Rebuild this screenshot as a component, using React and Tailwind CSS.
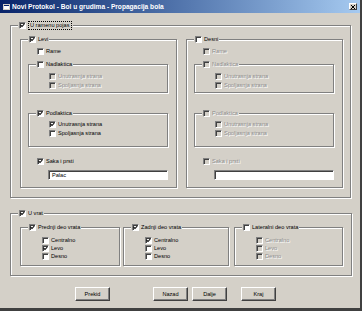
import React from "react";

const FONT = { fontFamily: '"Liberation Sans", Arial, sans-serif' };

function Cb({ checked = false, disabled = false }) {
  return (
    <span
      className={
        "relative inline-flex items-center justify-center w-[7px] h-[7px] shrink-0 border border-t-[#808080] border-l-[#808080] border-b-white border-r-white shadow-[inset_1px_1px_0_#404040] " +
        (disabled ? "bg-[#d4d0c8]" : "bg-white")
      }
    >
      {checked && (
        <svg width="5" height="5" viewBox="0 0 5 5" className="block">
          <polyline points="0.7,2.1 2,3.5 4.3,1" fill="none" stroke="#000" strokeWidth="1.1" />
        </svg>
      )}
    </span>
  );
}

function Label({ children, disabled = false, focus = false }) {
  return (
    <span
      className={
        "leading-[7px] whitespace-nowrap " +
        (disabled ? "text-[#8c8c8c] [text-shadow:1px_1px_0_#fff] " : "text-black ") +
        (focus ? "border border-dotted border-black px-[1px]" : "")
      }
    >
      {children}
    </span>
  );
}

function Row({ label, checked, disabled, className = "", h = "h-[8px]" }) {
  return (
    <div className={"flex items-center gap-[2px] " + h + " " + className}>
      <Cb checked={checked} disabled={disabled} />
      <Label disabled={disabled}>{label}</Label>
    </div>
  );
}

function Group({ label, checked, disabled, focus, className = "", children }) {
  return (
    <fieldset
      className={
        "border border-[#808080] shadow-[inset_1px_1px_0_#fff,1px_1px_0_#fff] min-w-0 " + className
      }
    >
      <legend className="ml-[7px] px-[1px] bg-[#d4d0c8]">
        <div className="flex items-center gap-[2px] h-[8px]">
          <Cb checked={checked} disabled={disabled} />
          <Label disabled={disabled} focus={focus}>
            {label}
          </Label>
        </div>
      </legend>
      {children}
    </fieldset>
  );
}

function Input({ value = "" }) {
  return (
    <div className="ml-[20px] mt-[5px] w-[120px] h-[10px] border border-t-[#808080] border-l-[#808080] border-b-white border-r-white shadow-[inset_1px_1px_0_#404040] bg-white flex items-center pl-[3px] leading-[7px]">
      {value}
    </div>
  );
}

function Side({ name, on, nad, pod, saka, value, className = "" }) {
  const dis = !on;
  return (
    <Group label={name} checked={on} className={"w-[157px] " + className}>
      <div className="flex flex-col pl-[7px] pr-[8px] pb-[7px]">
        <Row label="Rame" disabled={dis} className="ml-[9px] mt-[4px]" />
        <Group label="Nadlaktica" checked={nad.on} disabled={dis} className="mt-[5px]">
          <div className="flex flex-col pl-[20px] pt-[4px] pb-[2px]">
            <Row label="Unutrasnja strana" checked={nad.a} disabled={dis || !nad.on} h="h-[9px]" />
            <Row label="Spoljasnja strana" checked={nad.b} disabled={dis || !nad.on} h="h-[9px]" />
          </div>
        </Group>
        <Group label="Podlaktica" checked={pod.on} disabled={dis} className="mt-[16px]">
          <div className="flex flex-col pl-[20px] pt-[3px] pb-[8px]">
            <Row label="Unutrasnja strana" checked={pod.a} disabled={dis || !pod.on} h="h-[9px]" />
            <Row label="Spoljasnja strana" checked={pod.b} disabled={dis || !pod.on} h="h-[9px]" />
          </div>
        </Group>
        <Row label="Saka i prsti" checked={saka} disabled={dis} className="ml-[9px] mt-[10px]" />
        <Input value={value} />
      </div>
    </Group>
  );
}

function Neck({ label, on, c, l, d, className = "" }) {
  const dis = !on;
  return (
    <Group label={label} checked={on} className={className}>
      <div className="flex flex-col pl-[21px] pt-[5px] pb-[5px]">
        <Row label="Centralno" checked={c} disabled={dis} />
        <Row label="Levo" checked={l} disabled={dis} />
        <Row label="Desno" checked={d} disabled={dis} />
      </div>
    </Group>
  );
}

function Btn({ children, className = "" }) {
  return (
    <div
      className={
        "w-[35px] h-[14px] flex items-center justify-center border border-t-white border-l-white border-b-[#404040] border-r-[#404040] shadow-[inset_-1px_-1px_0_#808080] bg-[#d4d0c8] text-black leading-[7px] " +
        className
      }
    >
      {children}
    </div>
  );
}

export default function App() {
  return (
    <div
      style={FONT}
      className="w-[362px] h-[311px] bg-[#d4d0c8] text-[5.6px] text-black flex flex-col border-r-2 border-b-[3px] border-r-[#404040] border-b-[#404040] overflow-hidden"
    >
      <div className="h-[13px] shrink-0 flex items-center bg-gradient-to-r from-[#0a246a] to-[#a6caf0] pl-[3px] pr-[3px]">
        <svg width="7" height="6" viewBox="0 0 7 6" className="shrink-0">
          <rect x="0" y="0" width="7" height="6" fill="#d4d0c8" />
          <rect x="1" y="1" width="5" height="4" fill="#fff" />
          <rect x="1" y="1" width="5" height="1" fill="#0a246a" />
        </svg>
        <span className="ml-[2px] text-white font-bold text-[6.6px] leading-[8px] whitespace-nowrap">
          Novi Protokol - Bol u grudima - Propagacija bola
        </span>
        <div className="ml-auto w-[8px] h-[7px] bg-[#d4d0c8] border border-t-white border-l-white border-b-[#404040] border-r-[#404040] flex items-center justify-center">
          <svg width="4" height="4" viewBox="0 0 4 4">
            <path d="M0 0L4 4M4 0L0 4" stroke="#000" strokeWidth="1" />
          </svg>
        </div>
      </div>

      <div className="flex flex-col pl-[10px] pt-[8px]">
        <Group label="U ramenu pojas" checked focus className="w-[341px]">
          <div className="flex pl-[9px] pt-[6px] pb-[9px]">
            <Side
              name="Levi"
              on
              nad={{ on: false, a: false, b: false }}
              pod={{ on: true, a: true, b: false }}
              saka
              value="Palac"
            />
            <Side
              name="Desni"
              on={false}
              nad={{ on: false, a: false, b: false }}
              pod={{ on: false, a: false, b: false }}
              saka={false}
              value=""
              className="ml-[9px]"
            />
          </div>
        </Group>

        <Group label="U vrat" checked className="w-[342px] mt-[11px]">
          <div className="flex pl-[9px] pt-[6px] pb-[9px]">
            <Neck label="Prednji deo vrata" on c={false} l d={false} className="w-[100px]" />
            <Neck label="Zadnji deo vrata" on c l={false} d={false} className="w-[106px] ml-[3px]" />
            <Neck label="Lateralni deo vrata" on={false} className="w-[109px] ml-[5px]" />
          </div>
        </Group>

        <div className="flex mt-[11px] pl-[65px]">
          <Btn>Prekid</Btn>
          <Btn className="ml-[43px]">Nazad</Btn>
          <Btn className="ml-[4px]">Dalje</Btn>
          <Btn className="ml-[14px]">Kraj</Btn>
        </div>
      </div>
    </div>
  );
}
